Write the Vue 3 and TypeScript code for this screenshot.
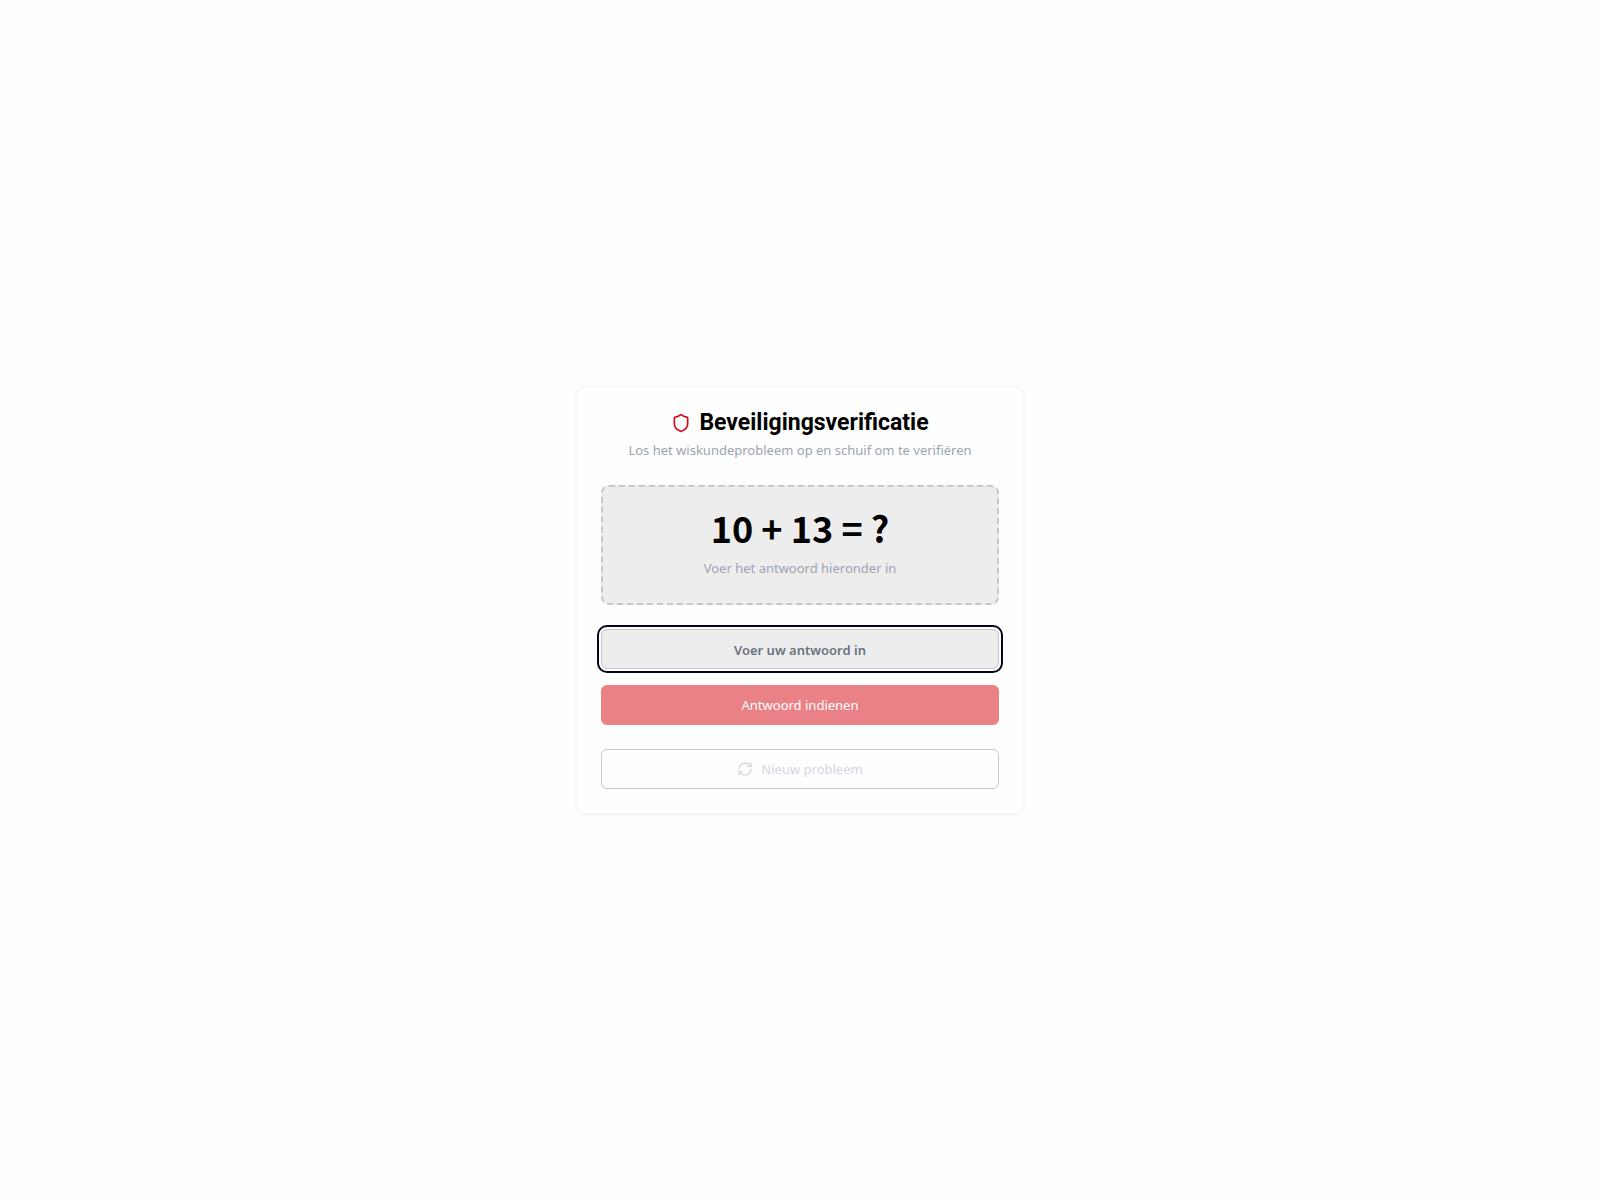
<script setup lang="ts">
import { computed, ref } from 'vue'

const left = 10
const right = 13
const answer = ref('')
const question = computed(() => `${left} + ${right} = ?`)
</script>

<template>
  <main class="page">
    <section class="card">
      <header class="header">
        <h1 class="title">
          <svg class="shield" viewBox="0 0 24 24" aria-hidden="true">
            <path d="M20 13c0 5-3.5 7.5-7.66 8.95a1 1 0 0 1-.67-.01C7.5 20.5 4 18 4 13V6a1 1 0 0 1 1-1c2 0 4.5-1.2 6.24-2.72a1.17 1.17 0 0 1 1.52 0C14.51 3.81 17 5 19 5a1 1 0 0 1 1 1z" />
          </svg>
          Beveiligingsverificatie
        </h1>
        <p class="hint">Los het wiskundeprobleem op en schuif om te verifiëren</p>
      </header>

      <div class="problem">
        <div class="question">{{ question }}</div>
        <p class="hint">Voer het antwoord hieronder in</p>
      </div>

      <form class="form" @submit.prevent>
        <input v-model="answer" class="answer" type="text" inputmode="numeric" placeholder="Voer uw antwoord in" aria-label="Voer uw antwoord in" />
        <button class="button submit" type="submit" :disabled="!answer">Antwoord indienen</button>
      </form>

      <button class="button renew" type="button">
        <svg class="refresh" viewBox="0 0 24 24" aria-hidden="true">
          <path d="M3 12a9 9 0 0 1 9-9 9.75 9.75 0 0 1 6.74 2.74L21 8" />
          <path d="M21 3v5h-5" />
          <path d="M21 12a9 9 0 0 1-9 9 9.75 9.75 0 0 1-6.74-2.74L3 16" />
          <path d="M8 16H3v5" />
        </svg>
        Nieuw probleem
      </button>
    </section>
  </main>
</template>

<style>
body {
  background: #fefefe;
}
</style>

<style scoped>
.page {
  display: flex;
  align-items: center;
  justify-content: center;
  min-height: 100vh;
  color: #000;
  font-family: "Noto Sans", sans-serif;
}
.card {
  box-sizing: border-box;
  display: flex;
  flex-direction: column;
  gap: 24px;
  width: 100%;
  max-width: 448px;
  padding: 24px;
  border: 1px solid #f5f5f5;
  border-radius: 8px;
  background: #fefefe;
  box-shadow: 0 1px 2px rgb(0 0 0 / 5%);
}
.header {
  display: flex;
  flex-direction: column;
  gap: 6px;
  padding-bottom: 2px;
  text-align: center;
}
.title {
  display: flex;
  align-items: center;
  justify-content: center;
  gap: 8px;
  margin: 0;
  font-family: Roboto, sans-serif;
  font-size: 23px;
  font-weight: 700;
  line-height: 24px;
}
svg {
  flex: none;
  fill: none;
  stroke: currentColor;
  stroke-width: 2;
  stroke-linecap: round;
  stroke-linejoin: round;
}
.shield {
  width: 20px;
  height: 20px;
  color: #d9041b;
}
.hint {
  margin: 0;
  color: #9ca3af;
  font-size: 13px;
  line-height: 18px;
}
.problem {
  display: flex;
  flex-direction: column;
  gap: 16px;
  padding: 24px 24px 26px;
  border: 2px dashed #c8c8c8;
  border-radius: 8px;
  background: #ededed;
  text-align: center;
}
.question {
  font-family: "Noto Sans CJK SC", sans-serif;
  font-size: 36px;
  font-weight: 700;
  line-height: 32px;
}
.form {
  display: flex;
  flex-direction: column;
  gap: 16px;
}
.answer,
.button {
  box-sizing: border-box;
  width: 100%;
  height: 40px;
  border-radius: 6px;
  font-family: inherit;
  font-size: 13px;
  line-height: 20px;
  text-align: center;
}
.answer {
  padding: 9px 12px 7px;
  border: 1px solid #c8c8c8;
  outline: 2px solid #020817;
  outline-offset: 2px;
  background: #ededed;
  font-weight: 600;
}
.answer::placeholder {
  color: #6b7280;
  opacity: 1;
}
.button {
  display: flex;
  align-items: center;
  justify-content: center;
  gap: 8px;
  padding: 8px 12px;
  font-weight: 400;
}
.submit {
  border: 0;
  background: #ea8186;
  color: #fff;
}
.renew {
  border: 1px solid #c8c8c8;
  background: #fefefe;
  color: #d4d7de;
}
.refresh {
  width: 16px;
  height: 16px;
}
</style>
